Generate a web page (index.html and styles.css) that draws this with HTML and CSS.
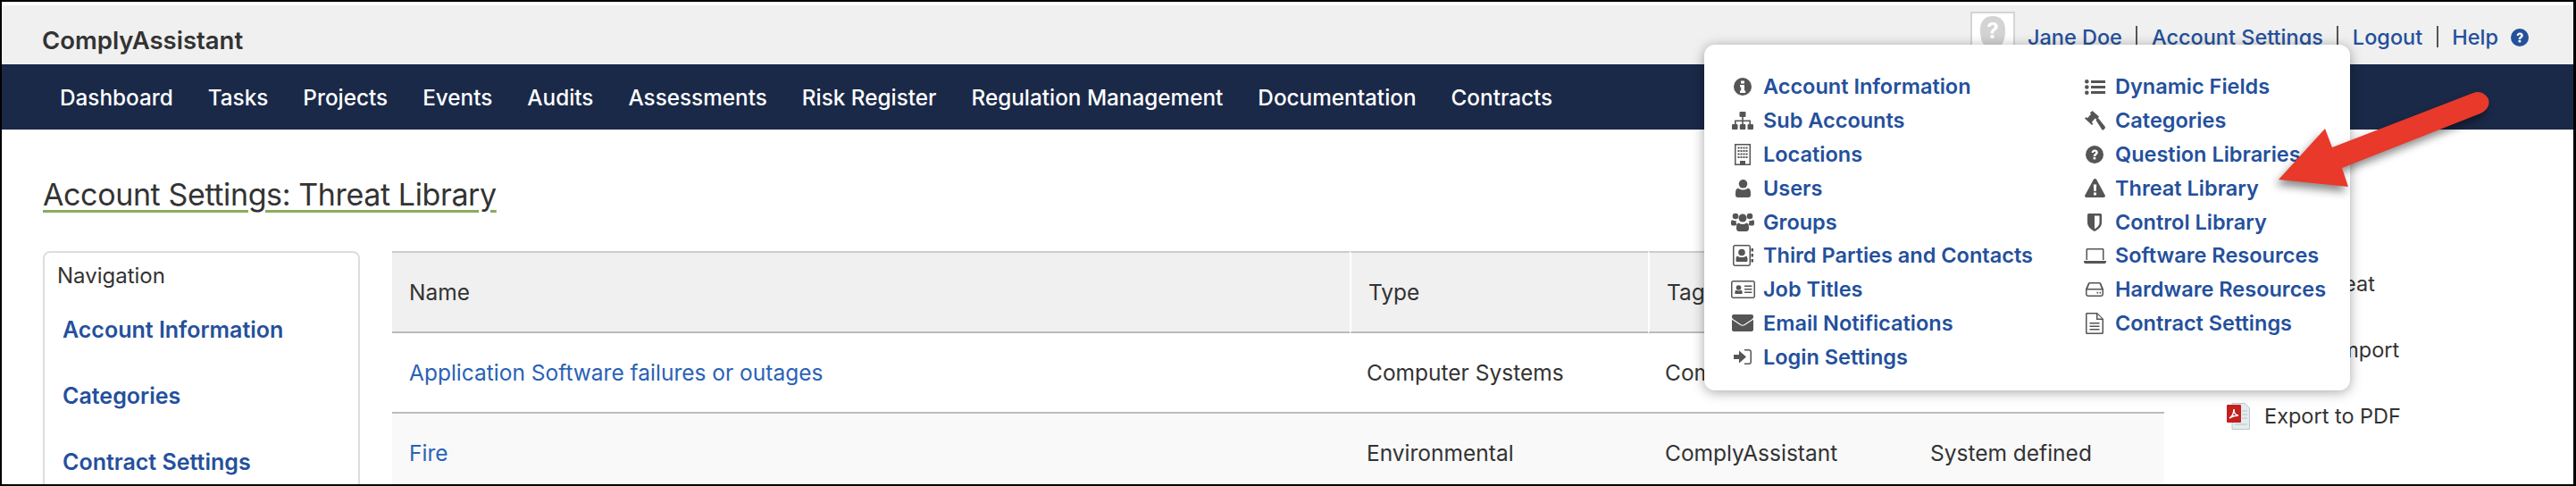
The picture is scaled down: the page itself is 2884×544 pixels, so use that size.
FILE: index.html
```html
<!DOCTYPE html>
<html lang="en">
<head>
<meta charset="utf-8">
<title>ComplyAssistant - Threat Library</title>
<link rel="stylesheet" href="styles.css">
</head>
<body>
<div class="frame">
  <header class="topbar">
    <div class="brand">ComplyAssistant</div>
    <div class="userbar">
      <svg class="avatar" viewBox="0 0 50 60"><rect x="1" y="1" width="48" height="58" fill="#fff" stroke="#d4d4d4" stroke-width="2"/><path d="M25 5c9 0 14 6 14 15 0 7-1 14-5 18l-1 6c4 3 9 4 12 8H5c3-4 8-5 12-8l-1-6c-4-4-5-11-5-18C11 11 16 5 25 5z" fill="#d3d3d3"/><text x="25" y="30" class="avatar-q">?</text></svg>
      <a class="ulink" href="#">Jane Doe</a><span class="sep"></span>
      <a class="ulink" href="#">Account Settings</a><span class="sep"></span>
      <a class="ulink" href="#">Logout</a><span class="sep"></span>
      <a class="ulink" href="#">Help</a>
      <svg class="help" viewBox="0 0 24 24"><circle cx="12" cy="12" r="12" fill="#24509c"/><path d="M8 9.500C8 7 10 5.500 12.200 5.500c2.400 0 4.300 1.500 4.300 3.800 0 3-3 3-3 5h-3c0-3.500 3-3.500 3-5 0-.7-.5-1.200-1.300-1.200-.8 0-1.400.5-1.500 1.400z" fill="#fff"/><rect x="10.300" y="15.500" width="3.200" height="3" fill="#fff"/></svg>
    </div>
  </header>
  <nav class="mainnav">
    <a href="#">Dashboard</a><a href="#">Tasks</a><a href="#">Projects</a><a href="#">Events</a><a href="#">Audits</a><a href="#">Assessments</a><a href="#">Risk Register</a><a href="#">Regulation Management</a><a href="#">Documentation</a><a href="#">Contracts</a>
  </nav>
  <main class="content">
    <h1 class="title">Account Settings: Threat Library</h1>
    <div class="columns">
      <aside class="sidenav">
        <div class="sidenav-head">Navigation</div>
        <a href="#">Account Information</a>
        <a href="#">Categories</a>
        <a href="#">Contract Settings</a>
      </aside>
      <table class="grid">
        <colgroup><col class="c1"><col class="c2"><col class="c3"><col class="c4"></colgroup>
        <thead><tr><th>Name</th><th>Type</th><th>Tags</th><th>Source</th></tr></thead>
        <tbody>
          <tr><td><a href="#">Application Software failures or outages</a></td><td>Computer Systems</td><td>ComplyAssistant</td><td>System defined</td></tr>
          <tr class="alt"><td><a href="#">Fire</a></td><td>Environmental</td><td>ComplyAssistant</td><td>System defined</td></tr>
        </tbody>
      </table>
      <div class="actions">
        <div class="action"><span class="action-gap"></span>Add Threat</div>
        <div class="action"><span class="action-gap"></span>Threat Import</div>
        <div class="action">
          <svg class="pdf" viewBox="0 0 26 30"><path d="M6 .5h14l5.500 5v24H6z" fill="#e4ecef" stroke="#b9c7cc"/><path d="M17 9h6M17 13h6M17 17h6M9 24h14" stroke="#b4c2c8"/><rect x="0" y="2" width="16" height="20" rx="1" fill="#c3201f"/><path d="M3 17c3-1 5-6 5-10 0 4 2 7 5 7-3 0-7 1-10 3z" fill="none" stroke="#fff" stroke-width="1.500"/></svg>
          Export to PDF
        </div>
      </div>
    </div>
  </main>

  <div class="popover">
    <ul class="menu">
      <li><span class="ico"><svg width="20" height="20" viewBox="0 0 20 20"><circle cx="10" cy="10" r="10"/><path d="M8 3.500h4v3H8zM7 8h5v6.500h1.200V17H7v-2.500h1.200v-4H7z" fill="#fff"/></svg></span><a href="#">Account Information</a></li>
      <li><span class="ico"><svg width="24" height="20" viewBox="0 0 24 20"><rect x="8.500" y="0" width="7" height="6" rx="1"/><rect x="0" y="14" width="6.500" height="6" rx="1"/><rect x="8.800" y="14" width="6.500" height="6" rx="1"/><rect x="17.500" y="14" width="6.500" height="6" rx="1"/><path d="M11.200 6h1.600v3.500h8.200V14h-1.600v-3h-6.600v3h-1.600v-3H4.600v3H3V9.500h8.200z"/></svg></span><a href="#">Sub Accounts</a></li>
      <li><span class="ico"><svg width="18" height="24" viewBox="0 0 18 24"><path d="M0 0h18v24H0zM1.500 1.500v21H6V19h6v3.500h4.500v-21z"/><path d="M3.500 3.500h2v2h-2zM6.500 3.500h2v2h-2zM9.500 3.500h2v2h-2zM12.500 3.500h2v2h-2zM3.500 7h2v2h-2zM6.500 7h2v2h-2zM9.500 7h2v2h-2zM12.500 7h2v2h-2zM3.500 10.500h2v2h-2zM6.500 10.500h2v2h-2zM9.500 10.500h2v2h-2zM12.500 10.500h2v2h-2zM3.500 14h2v2h-2zM6.500 14h2v2h-2zM9.500 14h2v2h-2zM12.500 14h2v2h-2z"/></svg></span><a href="#">Locations</a></li>
      <li><span class="ico"><svg width="17" height="20" viewBox="0 0 17 20"><circle cx="8.500" cy="4.800" r="4.800"/><path d="M3 9.500c1.500 1.500 3.500 2 5.500 2s4-.5 5.500-2c2 .5 3 2.500 3 5.500v2.500c0 1.500-1 2.500-2.500 2.500h-12C1 20 0 19 0 17.500V15c0-3 1-5 3-5.500z"/></svg></span><a href="#">Users</a></li>
      <li><span class="ico"><svg width="26" height="21" viewBox="0 0 26 21"><circle cx="5" cy="4" r="3.300"/><circle cx="21" cy="4" r="3.300"/><circle cx="13" cy="6" r="4.500"/><path d="M1 8c1 1 3 1.500 5 1-.5 1.500-.5 3 .5 4.500-.5 0-1 .5-1.500 1H2c-1 0-2-.5-2-2V11c0-1 .2-2 1-3zM25 8c-1 1-3 1.500-5 1 .5 1.500.5 3-.5 4.500.5 0 1 .5 1.500 1h3c1 0 2-.5 2-2V11c0-1-.2-2-1-3zM8.500 11.500c1.500 1 3 1.500 4.500 1.500s3-.5 4.500-1.500c1.500.5 2.500 2 2.500 5v1.500c0 2-1.500 3-3 3H9c-1.500 0-3-1-3-3v-1.500c0-3 1-4.500 2.500-5z"/></svg></span><a href="#">Groups</a></li>
      <li><span class="ico"><svg width="23" height="24" viewBox="0 0 23 24"><path d="M2.500 0h15C19 0 20 1 20 2.500v19c0 1.500-1 2.500-2.500 2.500h-15C1 24 0 23 0 21.500v-19C0 1 1 0 2.500 0zM2.500 1.500c-.6 0-1 .4-1 1v19c0 .6.4 1 1 1h15c.6 0 1-.4 1-1v-19c0-.6-.4-1-1-1z"/><path d="M20.500 4H23v3.500h-2.500zM20.500 10H23v3.500h-2.500zM20.500 16H23v3.500h-2.500z"/><circle cx="10" cy="8.500" r="3.800"/><path d="M5 12.500c1.500 1 3 1.500 5 1.500s3.500-.5 5-1.500c1 .5 1.500 2 1.500 3.500v1.500c0 1-.5 1.500-1.500 1.500H5c-1 0-1.500-.5-1.500-1.500V16c0-1.500.5-3 1.500-3.500z"/></svg></span><a href="#">Third Parties and Contacts</a></li>
      <li><span class="ico"><svg width="27" height="20" viewBox="0 0 27 20"><path d="M2.500 0h22C26 0 27 1 27 2.500v15c0 1.500-1 2.500-2.500 2.500h-22C1 20 0 19 0 17.500v-15C0 1 1 0 2.500 0zM2.500 1.500c-.6 0-1 .4-1 1v15c0 .6.4 1 1 1h22c.6 0 1-.4 1-1v-15c0-.6-.4-1-1-1z"/><circle cx="8.500" cy="8" r="2.800"/><path d="M5.500 10.800c2 1 4 1 6 0 .8.500 1.200 1.500 1.200 3.200 0 .8-.5 1-1.200 1h-6c-.7 0-1.200-.2-1.200-1 0-1.700.4-2.700 1.200-3.200zM15 5.500h8.500v1.600H15zM15 9h8.500v1.600H15zM15 12.500h8.500v1.600H15z"/></svg></span><a href="#">Job Titles</a></li>
      <li><span class="ico"><svg width="24" height="19" viewBox="0 0 24 19"><path d="M2 0h20c1.200 0 2 .8 2 2v.8c0 1-.6 1.800-1.400 2.400L14 11c-1.200.9-2.800.9-4 0L1.400 5.200C.6 4.600 0 3.800 0 2.800V2C0 .8.800 0 2 0z"/><path d="M0 5.800 9.500 12c1.500 1 3.500 1 5 0L24 5.800V17c0 1.200-.8 2-2 2H2c-1.200 0-2-.8-2-2z"/></svg></span><a href="#">Email Notifications</a></li>
      <li><span class="ico"><svg width="20" height="17" viewBox="0 0 20 17"><path d="M0 6h6V1.500L14 8.500l-8 7V11H0z"/><path d="M12 0h5c1.700 0 3 1.300 3 3v11c0 1.700-1.300 3-3 3h-5v-1.500h5c.8 0 1.500-.7 1.500-1.500V3c0-.8-.7-1.500-1.500-1.500h-5z"/></svg></span><a href="#">Login Settings</a></li>
    </ul>
    <ul class="menu">
      <li><span class="ico"><svg width="23" height="17" viewBox="0 0 23 17"><circle cx="2.300" cy="2.300" r="2.300"/><circle cx="2.300" cy="8.500" r="2.300"/><circle cx="2.300" cy="14.700" r="2.300"/><path d="M7 1h16v3H7zM7 7h16v3H7zM7 13h16v3H7z"/></svg></span><a href="#">Dynamic Fields</a></li>
      <li><span class="ico"><svg width="23" height="22" viewBox="0 0 23 22"><path d="M8.500 0 16 6.500 13.500 10l-2-1.500L7.800 13l1.700 1.500-1.500 1.500L0 8.500l1.500-1.500 1.500 1.200 4-4.400-1.200-1.300z"/><path d="M12.500 10.500l2.500-2.500 7.500 9.500c.7.800.6 1.700 0 2.300l-1 1.200c-.7.700-1.600.7-2.300 0z"/></svg></span><a href="#">Categories</a></li>
      <li><span class="ico"><svg width="20" height="20" viewBox="0 0 24 24"><circle cx="12" cy="12" r="12"/><path d="M8 9.500C8 7 10 5.500 12.200 5.500c2.400 0 4.300 1.500 4.300 3.800 0 3-3 3-3 5h-3c0-3.500 3-3.500 3-5 0-.7-.5-1.200-1.300-1.200-.8 0-1.400.5-1.500 1.400z" fill="#fff"/><rect x="10.300" y="15.500" width="3.200" height="3" fill="#fff"/></svg></span><a href="#">Question Libraries</a></li>
      <li><span class="ico"><svg width="23" height="21" viewBox="0 0 23 21"><path d="M11.500 0c.7 0 1.300.4 1.700 1l9.500 17.500c.7 1.200-.2 2.500-1.500 2.500h-19.400C.5 21-.4 19.700.3 18.500L9.800 1c.4-.6 1-1 1.700-1z"/><path d="M9.800 6.500h3.400l-.5 7.500h-2.400zM10 15.500h3v3h-3z" fill="#fff"/></svg></span><a href="#">Threat Library</a></li>
      <li><span class="ico"><svg width="16" height="20" viewBox="0 0 16 20"><path d="M0 1.500C0 .7.700 0 1.500 0h13c.8 0 1.500.7 1.500 1.500V10c0 5-4 8-8 10-4-2-8-5-8-10z"/><path d="M8 2.500h5.500V10c0 3.500-2.700 5.700-5.500 7.300z" fill="#fff"/></svg></span><a href="#">Control Library</a></li>
      <li><span class="ico"><svg width="25" height="17" viewBox="0 0 25 17"><path d="M4 0h17c1 0 1.500.6 1.500 1.500V13H21V1.500H4V13H2.500V1.500C2.500.6 3 0 4 0z"/><path d="M0 14h25v1c0 1.200-.8 2-2 2H2c-1.200 0-2-.8-2-2z"/></svg></span><a href="#">Software Resources</a></li>
      <li><span class="ico"><svg width="20" height="16" viewBox="0 0 20 16"><path d="M4.500 0h11c.8 0 1.400.4 1.700 1L20 7.500V13c0 1.700-1.300 3-3 3H3c-1.700 0-3-1.300-3-3V7.500L2.800 1C3.100.4 3.700 0 4.500 0zM4.500 1.500 2.300 7h15.400l-2.200-5.500zM1.500 8.500V13c0 .8.700 1.500 1.500 1.500h14c.8 0 1.500-.7 1.500-1.500V8.500z"/><path d="M12.500 10.800h1.600v1.600h-1.600zM15.500 10.800h1.600v1.600h-1.600z"/></svg></span><a href="#">Hardware Resources</a></li>
      <li><span class="ico"><svg width="20" height="24" viewBox="0 0 20 24"><path d="M1.500 0H13l7 7v15.500c0 .8-.7 1.500-1.500 1.500h-17C.7 24 0 23.300 0 22.500v-21C0 .7.700 0 1.500 0zM1.500 1.500v21h17V8H12V1.500zM13.500 2v4.500H18z"/><path d="M4.500 11h11v1.500h-11zM4.500 14.500h11V16h-11zM4.500 18h11v1.500h-11z"/></svg></span><a href="#">Contract Settings</a></li>
    </ul>
  </div>

  <svg class="arrow" viewBox="0 0 260 130" width="260" height="130">
    <path d="M9 111 61 54 69 75 227 14C234 11 241 15 244 21 246 28 242 34 235 37L80 98 87 119z" fill="#e8392a"/>
  </svg>
</div>
</body>
</html>
```

FILE: styles.css
```css
* { box-sizing: border-box; }
html, body { margin: 0; height: 544px; overflow: hidden; background: #fff; }
body { font-family: Inter, "Liberation Sans", sans-serif; color: #333; }
a { text-decoration: none; }

.frame {
  position: relative;
  width: 2884px;
  height: 544px;
  overflow: hidden;
  border-style: solid;
  border-color: #000;
  border-width: 2px 3px 2px 2px;
  padding-top: 4px;
  background: #fff;
}

.topbar {
  height: 66px;
  background: #f0f0f0;
  display: flex;
  justify-content: space-between;
  padding: 0 50px 0 45px;
}
.brand { font-size: 27.5px; font-weight: 600; line-height: 26px; padding-top: 26px; color: #333; }
.userbar { display: flex; align-items: flex-start; }
.avatar { width: 50px; height: 60px; margin: 7px 14px 0 0; }
.avatar-q { font: 700 24px Inter, sans-serif; fill: #fff; text-anchor: middle; }
.ulink { font-size: 23.5px; font-weight: 500; line-height: 24px; margin-top: 24px; color: #24509c; }
.sep { width: 2px; height: 24px; background: #555; margin: 23px 15.5px 0; }
.help { width: 20px; height: 20px; margin: 26px 0 0 14px; }

.mainnav {
  height: 73px;
  background: #1a2948;
  display: flex;
  align-items: center;
  gap: 39px;
  padding: 0 0 0 65px;
}
.mainnav a { color: #fff; font-size: 24.3px; font-weight: 500; line-height: 28px; }

.content { padding: 51px 0 0 46px; }
.title {
  margin: 0 0 41px;
  font-size: 34px;
  font-weight: 400;
  letter-spacing: -0.38px;
  line-height: 44px;
  color: #333;
  text-decoration: underline;
  text-decoration-color: #8aad5a;
  text-decoration-thickness: 3px;
  text-underline-offset: 5px;
}

.columns { display: flex; align-items: flex-start; }
.sidenav {
  width: 355px;
  height: 300px;
  flex: none;
  border: 2px solid #ddd;
  border-radius: 8px;
  padding: 11px 14px;
  margin-right: 36px;
}
.sidenav-head { font-size: 24px; line-height: 30px; margin-bottom: 30px; }
.sidenav a { display: block; margin: 0 0 44px 6px; font-size: 25px; font-weight: 600; line-height: 30px; color: #24509c; }

.grid { width: 1984px; flex: none; table-layout: fixed; border-collapse: separate; border-spacing: 0; font-size: 24.5px; line-height: 30px; }
.c1 { width: 1072px; } .c2 { width: 334px; } .c3 { width: 297px; } .c4 { width: 281px; }
.grid th {
  height: 92px;
  text-align: left;
  font-weight: 400;
  background: #f0f0f0;
  border-top: 2px solid #ccc;
  border-bottom: 2px solid #bbb;
  border-left: 2px solid #fff;
  padding: 0 19px;
}
.grid th:first-child, .grid td:first-child { border-left: 0; padding-left: 19px; }
.grid td { height: 90px; border-bottom: 2px solid #bbb; padding: 0 19px; white-space: nowrap; }
.grid td a { color: #2a62b5; }
.grid .alt td { background: #f9f9f9; }

.actions { margin-left: 70px; padding-top: 22px; display: flex; flex-direction: column; gap: 44px; font-size: 23.5px; line-height: 30px; }
.action { display: flex; align-items: center; gap: 16px; white-space: nowrap; }
.action-gap { width: 26px; height: 30px; }
.pdf { width: 26px; height: 30px; }

.popover {
  position: absolute;
  left: 1906px;
  top: 48px;
  width: 723px;
  height: 387px;
  background: #fff;
  border-radius: 12px;
  box-shadow: 0 2px 14px rgba(0,0,0,.35);
  display: grid;
  grid-template-columns: 394px 1fr;
  padding: 28.5px 0 0 26px;
}
.menu { list-style: none; margin: 0; padding: 0; display: flex; flex-direction: column; }
.menu li { height: 37.8px; display: flex; align-items: center; font-size: 23.5px; font-weight: 600; }
.menu a { color: #24509c; line-height: 30px; white-space: nowrap; }
.ico { width: 40px; margin-right: 0; display: flex; justify-content: center; flex: none; }
.ico svg { fill: #555; display: block; margin-left: -6px; }

.arrow {
  position: absolute;
  left: 2540px;
  top: 88px;
  overflow: visible;
  filter: drop-shadow(-3px 6px 5px rgba(0,0,0,.45));
}
```
